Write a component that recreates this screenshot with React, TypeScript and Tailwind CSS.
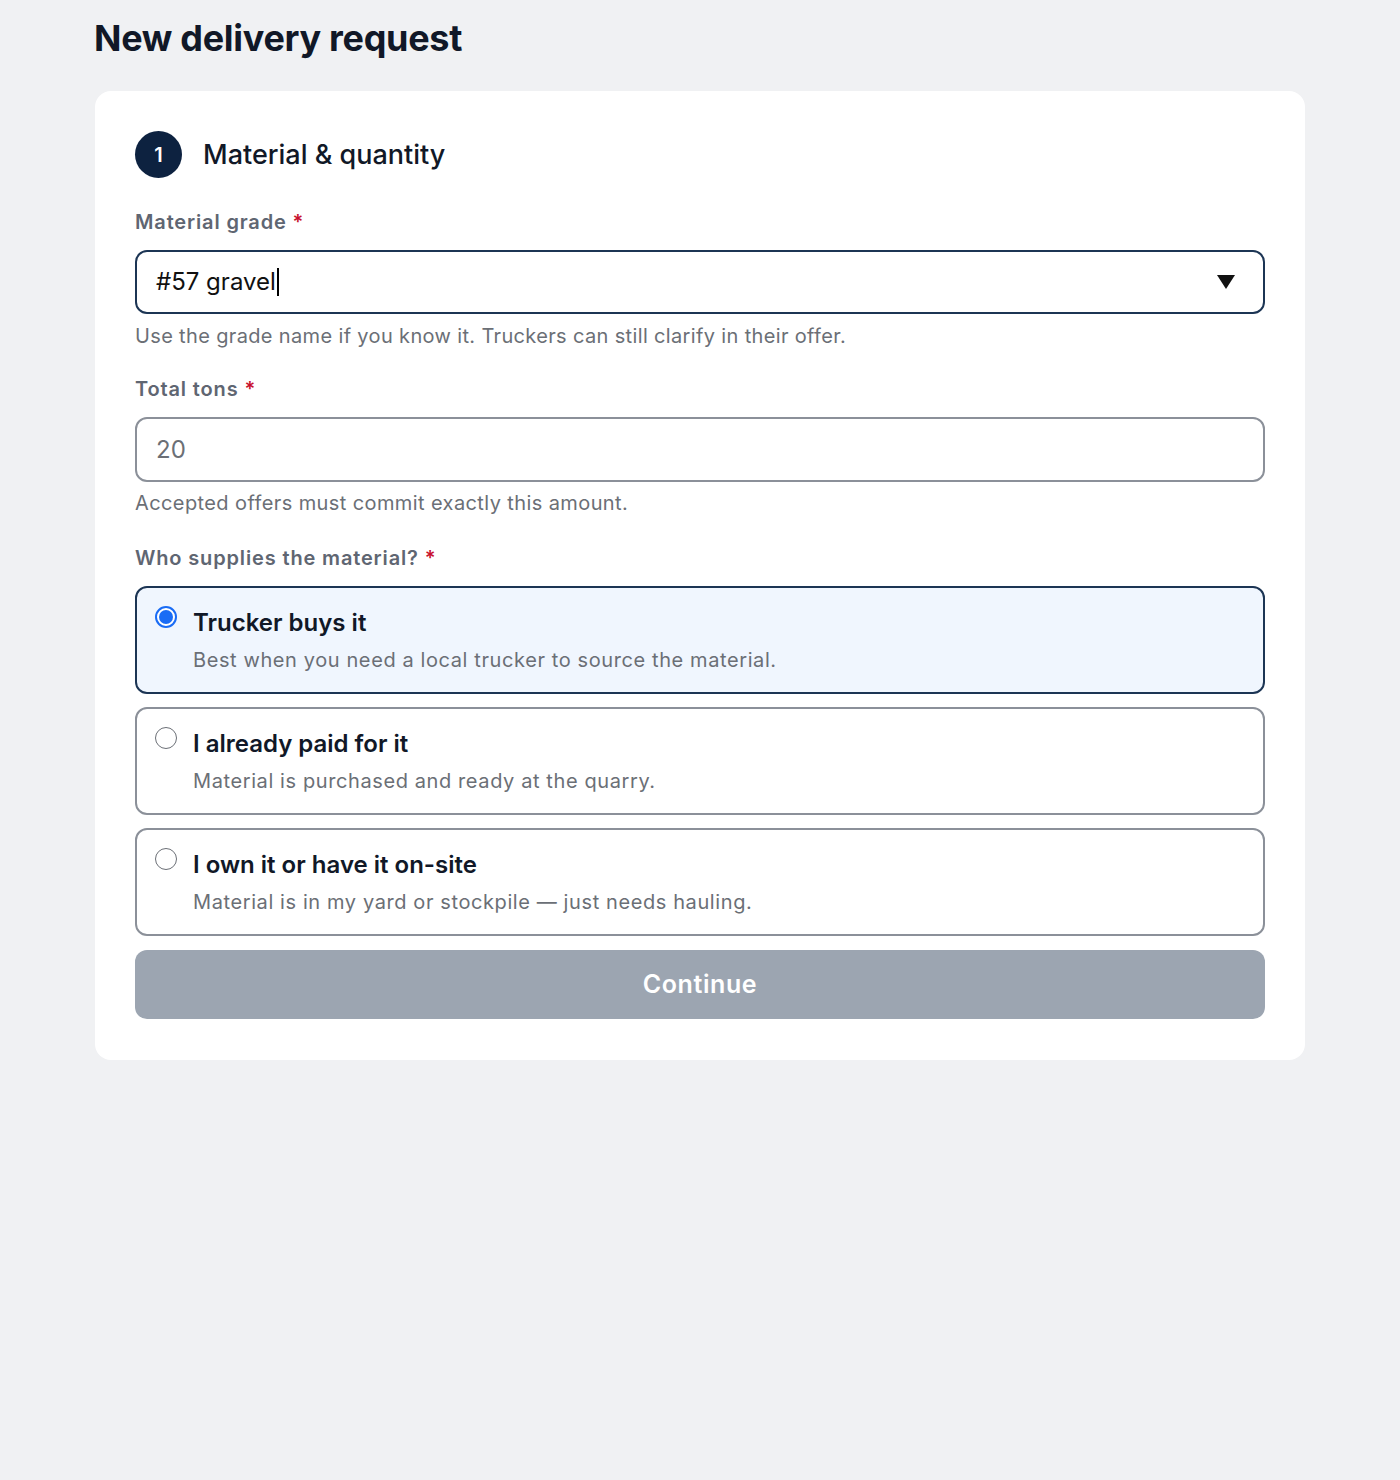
import React from "react";

function Radio({ checked }: { checked: boolean }) {
  if (checked) {
    return (
      <span className="mt-[-1px] flex h-[22px] w-[22px] shrink-0 items-center justify-center rounded-full border-[2px] border-[#1a6cf5] bg-white">
        <span className="h-[14px] w-[14px] rounded-full bg-[#1a6cf5]" />
      </span>
    );
  }
  return <span className="mt-[-1px] block h-[22px] w-[22px] shrink-0 rounded-full border-[1.5px] border-[#6b6f76] bg-white" />;
}

function Option({ checked, title, desc }: { checked: boolean; title: string; desc: string }) {
  return (
    <div
      className={
        checked
          ? "flex gap-[16px] rounded-[12px] border-[2px] border-[#1c3554] bg-[#f0f6fe] px-[18px] pt-[19px] pb-[18px]"
          : "flex gap-[16px] rounded-[12px] border-[2px] border-[#8b9099] bg-white px-[18px] pt-[19px] pb-[18px]"
      }
    >
      <Radio checked={checked} />
      <div className="flex flex-col">
        <div className="text-[24px] font-semibold leading-[32px] text-[#111827]">{title}</div>
        <div className="mt-[7px] text-[20px] leading-[28px] tracking-[0.6px] text-[#6b6f76]">{desc}</div>
      </div>
    </div>
  );
}

function Label({ children }: { children: React.ReactNode }) {
  return (
    <div className="text-[20px] font-semibold leading-[28px] tracking-[0.85px] text-[#5f6672]">
      {children} <span className="text-[#c8102e]">*</span>
    </div>
  );
}

export default function App() {
  return (
    <div
      className="min-h-[1480px] w-full bg-[#f0f1f3] pl-[94px] pr-[95px] pt-[14px]"
      style={{ fontFamily: "Inter, 'Noto Sans', sans-serif" }}
    >
      <h1 className="text-[36px] font-bold leading-[48px] tracking-[-0.3px] text-[#111827]">New delivery request</h1>
      <div className="mt-[29px] ml-[1px] w-[1210px] rounded-[16px] bg-white px-[40px] pt-[40px] pb-[41px]">
        <div className="flex items-center gap-[21px]">
          <div className="flex h-[47px] w-[47px] items-center justify-center rounded-full bg-[#0d2240] text-[20px] font-semibold text-white">
            1
          </div>
          <div className="text-[27px] font-medium leading-[36px] text-[#111827]">Material &amp; quantity</div>
        </div>

        <div className="mt-[30px]">
          <Label>Material grade</Label>
        </div>
        <div className="mt-[14px] flex h-[64px] items-center justify-between rounded-[12px] border-[2px] border-[#1c3554] bg-white pl-[19px] pr-[28px]">
          <div className="flex items-center text-[24px] leading-[32px] text-[#111]">
            #57 gravel<span className="ml-[1px] inline-block h-[28px] w-[2px] bg-black" />
          </div>
          <svg width="18" height="14" viewBox="0 0 18 14">
            <path d="M0 0 H18 L9 14 Z" fill="#111" />
          </svg>
        </div>
        <div className="mt-[8px] text-[20px] leading-[28px] tracking-[0.35px] text-[#6b6f76]">
          Use the grade name if you know it. Truckers can still clarify in their offer.
        </div>

        <div className="mt-[25px]">
          <Label>Total tons</Label>
        </div>
        <div className="mt-[14px] flex h-[65px] items-center rounded-[12px] border-[2px] border-[#8b9099] bg-white pl-[19px]">
          <span className="text-[24px] leading-[32px] text-[#6b6f76]">20</span>
        </div>
        <div className="mt-[7px] text-[20px] leading-[28px] tracking-[0.4px] text-[#6b6f76]">
          Accepted offers must commit exactly this amount.
        </div>

        <div className="mt-[27px]">
          <Label>Who supplies the material?</Label>
        </div>
        <div className="mt-[14px] flex flex-col gap-[13px]">
          <Option checked title="Trucker buys it" desc="Best when you need a local trucker to source the material." />
          <Option checked={false} title="I already paid for it" desc="Material is purchased and ready at the quarry." />
          <Option checked={false} title="I own it or have it on-site" desc="Material is in my yard or stockpile — just needs hauling." />
        </div>

        <button className="mt-[14px] flex h-[69px] w-full items-center justify-center rounded-[12px] bg-[#9ca5b1] text-[25px] font-semibold tracking-[0.6px] text-white">
          Continue
        </button>
      </div>
    </div>
  );
}
